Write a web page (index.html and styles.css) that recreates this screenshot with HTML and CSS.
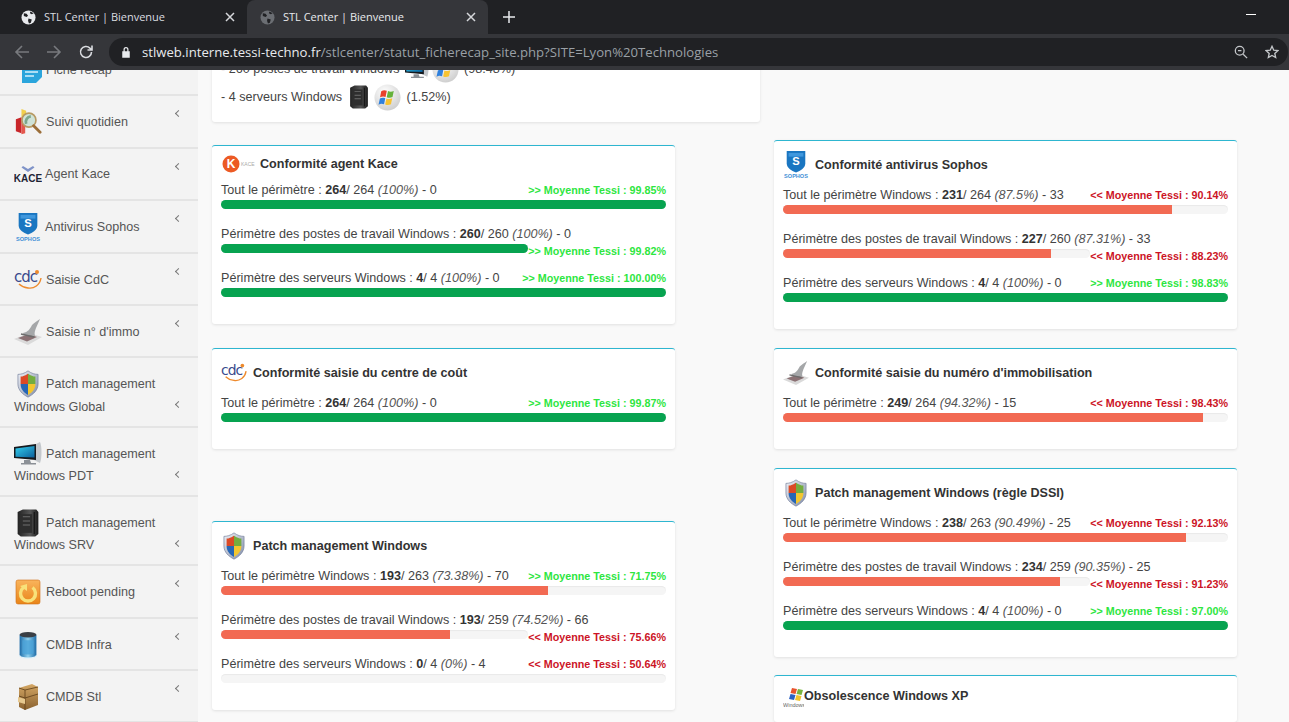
FILE: index.html
```html
<!DOCTYPE html>
<html lang="fr">
<head>
    <meta charset="UTF-8">
    <meta name="viewport" content="width=device-width, initial-scale=1.0">
    <title>STL Center | Bienvenue</title>
    <link rel="stylesheet" href="styles.css">
</head>
<body>
    <!-- Icon sprites -->
    <svg class="sprites" aria-hidden="true">
        <defs>
            <linearGradient id="g-silver" x1="0" y1="0" x2="1" y2="1"><stop offset="0" stop-color="#f2f4f8"/><stop offset="1" stop-color="#7f8ba8"/></linearGradient>
            <linearGradient id="g-screen" x1="0" y1="0" x2="1" y2="1"><stop offset="0" stop-color="#35d0ee"/><stop offset="1" stop-color="#0a5f9c"/></linearGradient>
            <linearGradient id="g-tower" x1="0" y1="0" x2="1" y2="0"><stop offset="0" stop-color="#222"/><stop offset=".6" stop-color="#555"/><stop offset="1" stop-color="#1c1c1c"/></linearGradient>
            <linearGradient id="g-orange" x1="0" y1="0" x2="0" y2="1"><stop offset="0" stop-color="#f9b45c"/><stop offset="1" stop-color="#e98518"/></linearGradient>
            <linearGradient id="g-can" x1="0" y1="0" x2="1" y2="0"><stop offset="0" stop-color="#1d6ca8"/><stop offset=".5" stop-color="#8fd0ee"/><stop offset="1" stop-color="#1d6ca8"/></linearGradient>
            <linearGradient id="g-box" x1="0" y1="0" x2="0" y2="1"><stop offset="0" stop-color="#d4a765"/><stop offset="1" stop-color="#8a6230"/></linearGradient>
            <radialGradient id="g-ball" cx=".4" cy=".3" r=".8"><stop offset="0" stop-color="#fff"/><stop offset="1" stop-color="#c9c9c9"/></radialGradient>
            <clipPath id="c-shield"><path d="M14 4C11 6.500 8 7.500 5.500 7.500V16C5.500 22 9.500 26 14 28.500C18.500 26 22.500 22 22.500 16V7.500C20 7.500 17 6.500 14 4Z"/></clipPath>
        </defs>

        <symbol id="i-globe" viewBox="0 0 16 16">
            <circle cx="8" cy="8" r="7.500" fill="currentColor"/>
            <path d="M3 3.500l3 .5 1.500 2-1.500 1.500-3-1zM8 9l3.500 1-1 3.500-2 1-1-3zM10 1.500l-.5 2 2 1 2-1z" fill="#202124"/>
        </symbol>
        <symbol id="i-shield" viewBox="0 0 28 32">
            <path d="M14 1C10 4 6 5 2.500 5V16C2.500 23 8 28 14 31C20 28 25.500 23 25.500 16V5C22 5 18 4 14 1Z" fill="url(#g-silver)" stroke="#75819c" stroke-width=".8"/>
            <g clip-path="url(#c-shield)">
                <rect x="4" y="3" width="10" height="13" fill="#dc4a26"/>
                <rect x="14" y="3" width="10" height="13" fill="#74ad3f"/>
                <rect x="4" y="16" width="10" height="14" fill="#2766b5"/>
                <rect x="14" y="16" width="10" height="14" fill="#f3c62f"/>
            </g>
        </symbol>
        <symbol id="i-monitor" viewBox="0 0 28 24">
            <path d="M20 3l6-3c2 4 2 16 0 21l-6-3z" fill="#c4c8cc"/>
            <path d="M0 5L22 2V18L0 16Z" fill="#15191e"/>
            <path d="M1.500 6.500L20.500 4V15.500L1.500 14.800Z" fill="url(#g-screen)"/>
            <path d="M10 18h6l1 3h5v1.500H7V21h3z" fill="#8b9096"/>
        </symbol>
        <symbol id="i-server" viewBox="0 0 24 27">
            <path d="M2 3l5-2.500h13L22 3V24l-3 2.500H5L2 24z" fill="url(#g-tower)"/>
            <path d="M5 5h11v18H5z" fill="#2e2e2e"/>
            <path d="M7 7h7v1H7zM7 11h7v1H7zM7 15h7v1H7z" fill="#6e6e6e"/>
            <path d="M18 3v21" stroke="#0f0f0f" stroke-width="1"/>
        </symbol>
        <symbol id="i-win" viewBox="0 0 28 28">
            <circle cx="14" cy="14" r="13.500" fill="url(#g-ball)"/>
            <path d="M7.500 7.500c2-1.200 4-1.200 5.800-.4l-1.300 6.300c-1.900-.8-3.800-.7-5.700.3z" fill="#e8412c"/>
            <path d="M14.500 7.300c2 1 4 1 6-.1l-1.300 6.400c-2 1-4 1-6 .2z" fill="#66b23b"/>
            <path d="M6.100 15c1.900-1 3.800-1 5.600-.3l-1.300 6.400c-1.900-.8-3.800-.7-5.700.3z" fill="#2f80dd"/>
            <path d="M12.900 15c2 .8 4 .8 6-.2l-1.300 6.300c-2 1-4 1-6 .2z" fill="#f7c331"/>
        </symbol>
        <symbol id="i-doc" viewBox="0 0 28 28">
            <path d="M8 8h20v13L22 27H8z" fill="#2ba5dc"/>
            <path d="M11 12h13M11 16h13M11 20h9" stroke="#d8f1fb" stroke-width="1.400"/>
            <path d="M2 0l9 9 3-2-8-8z" fill="#1b2430"/>
        </symbol>
        <symbol id="i-search" viewBox="0 0 28 30">
            <path d="M1 12l6-2v17l-6-2z" fill="#c8262a"/>
            <path d="M7 10l4 2v15l-4 1z" fill="#e4574d"/>
            <path d="M7 1l5 2v8l-5-1z" fill="#f1cf4c"/>
            <circle cx="15" cy="13" r="7.500" fill="#cfe3d8" stroke="#b79a63" stroke-width="1.800"/>
            <path d="M12 17a6 6 0 0 1 5-8" stroke="#7da78c" stroke-width="3" fill="none"/>
            <path d="M20 19l7 7" stroke="#9c6f3a" stroke-width="3" stroke-linecap="round"/>
        </symbol>
        <symbol id="i-stamp" viewBox="0 0 28 28">
            <path d="M0 21l15-6 13 4-14 8z" fill="#dadada"/>
            <path d="M4 20l11-4 8 3-10 4.500z" fill="#8b7174"/>
            <path d="M9 15c5-1 7-4 9-8 2-2 5-4 8-6l-4 9c-1 3-2 5-1 8l-11-1z" fill="#a5a7a9"/>
            <path d="M7 16l13 3" stroke="#6c6c6c" stroke-width="1.400"/>
        </symbol>
        <symbol id="i-reboot" viewBox="0 0 28 28">
            <rect x="2" y="2" width="24" height="24" rx="2" fill="url(#g-orange)" stroke="#d2701a" stroke-width=".6"/>
            <path d="M9.500 9.500a7.500 7.500 0 1 0 9 0" fill="none" stroke="#f8e27a" stroke-width="3.400"/>
            <path d="M6 8l7-2 0 7z" fill="#f8e27a"/>
        </symbol>
        <symbol id="i-can" viewBox="0 0 24 30">
            <path d="M3 4v22c0 4 18 4 18 0V4z" fill="url(#g-can)"/>
            <ellipse cx="12" cy="4" rx="9" ry="3" fill="#3a3f45"/>
            <path d="M6 10h12v14c-3 1.500-9 1.500-12 0z" fill="#4aa3d8" opacity=".8"/>
            <path d="M3 26c0 4 18 4 18 0" fill="none" stroke="#dff1fa" stroke-width="1.400"/>
        </symbol>
        <symbol id="i-box" viewBox="0 0 24 28">
            <path d="M3 5l13-4 6 3v18L9 27l-6-3z" fill="url(#g-box)"/>
            <path d="M3 13l6 2 13-4M3 5l6 2 13-3M9 7v20" fill="none" stroke="#5d3d18" stroke-width=".8"/>
            <path d="M2 14l7 2v5l-7-2z" fill="#e6c88f"/>
        </symbol>
    </svg>

    <div class="browser">
        <div class="tabstrip">
            <div class="tab">
                <svg class="tab-icon"><use href="#i-globe"/></svg>
                <span class="tab-title">STL Center | Bienvenue</span>
                <svg class="tab-close" viewBox="0 0 10 10"><path d="M1 1l8 8M9 1l-8 8"/></svg>
            </div>
            <div class="tab tab-active">
                <svg class="tab-icon"><use href="#i-globe"/></svg>
                <span class="tab-title">STL Center | Bienvenue</span>
                <svg class="tab-close" viewBox="0 0 10 10"><path d="M1 1l8 8M9 1l-8 8"/></svg>
            </div>
            <svg class="tab-new" viewBox="0 0 12 12"><path d="M6 0v12M0 6h12"/></svg>
            <div class="win-min"></div>
        </div>
        <div class="toolbar">
            <svg class="tool-icon tool-dim" viewBox="0 0 16 16"><path d="M15 8H2M8 2L2 8l6 6"/></svg>
            <svg class="tool-icon tool-dim" viewBox="0 0 16 16"><path d="M1 8h13M8 2l6 6-6 6"/></svg>
            <svg class="tool-icon" viewBox="0 0 16 16"><path d="M13.500 8a5.500 5.500 0 1 1-1.600-3.900L14 6M14 1.500V6H9.500"/></svg>
            <div class="omnibox">
                <svg class="lock" viewBox="0 0 12 14"><path d="M3 6V4a3 3 0 0 1 6 0v2h1.500v8h-9V6zM4.500 6h3V4a1.500 1.500 0 0 0-3 0z"/></svg>
                <span class="url"><span class="url-host">stlweb.interne.tessi-techno.fr</span>/stlcenter/statut_ficherecap_site.php?SITE=Lyon%20Technologies</span>
                <svg class="omni-icon" viewBox="0 0 16 16"><circle cx="6.500" cy="6.500" r="5"/><path d="M10.500 10.500L15 15M4.500 6.500h4"/></svg>
                <svg class="omni-icon" viewBox="0 0 16 16"><path d="M8 1.500l2 4.400 4.700.5-3.500 3.200 1 4.700L8 11.900l-4.200 2.400 1-4.700L1.300 6.400 6 5.900z"/></svg>
            </div>
        </div>
    </div>

    <div class="page">
        <nav class="sidebar">
            <a class="nav-item"><div class="nav-label"><svg class="nav-icon"><use href="#i-doc"/></svg>Fiche récap</div></a>
            <a class="nav-item"><div class="nav-label"><svg class="nav-icon"><use href="#i-search"/></svg>Suivi quotidien</div><span class="chevron"></span></a>
            <a class="nav-item"><div class="nav-label nav-label-tight nav-label-up"><svg class="nav-icon" viewBox="0 0 28 24">
                <path d="M9 4l5 3 5-3 1.500 1.500L14 10 7.500 5.500z" fill="#7f93c8"/>
                <text x="14" y="20" text-anchor="middle" class="logo-kace">KACE</text>
            </svg>Agent Kace</div><span class="chevron"></span></a>
            <a class="nav-item"><div class="nav-label nav-label-tight"><svg class="nav-icon" viewBox="0 0 28 30">
                <path d="M4 0h20v13c0 5-5 8-10 10C9 21 4 18 4 13z" fill="#1a76c1"/>
                <path d="M6 2h16v4H6z" fill="#3f97dd"/>
                <text x="14" y="15" text-anchor="middle" class="logo-s">S</text>
                <text x="14" y="29.500" text-anchor="middle" class="logo-sophos">SOPHOS</text>
            </svg>Antivirus Sophos</div><span class="chevron"></span></a>
            <a class="nav-item"><div class="nav-label"><svg class="nav-icon" viewBox="0 0 28 24">
                <text x="0" y="14" class="logo-cdc">cdc</text>
                <circle cx="23" cy="4" r="2" fill="#ee8a2c"/>
                <path d="M27 10c-1 7-7 11-13 10C10 19.500 7 18 5 16" fill="none" stroke="#ee8a2c" stroke-width="1.400"/>
            </svg>Saisie CdC</div><span class="chevron"></span></a>
            <a class="nav-item"><div class="nav-label"><svg class="nav-icon"><use href="#i-stamp"/></svg>Saisie n° d'immo</div><span class="chevron"></span></a>
            <a class="nav-item nav-item-double">
                <div class="nav-label"><svg class="nav-icon"><use href="#i-shield"/></svg>Patch management</div>
                <div class="nav-second">Windows Global<span class="chevron"></span></div>
            </a>
            <a class="nav-item nav-item-double">
                <div class="nav-label"><svg class="nav-icon"><use href="#i-monitor"/></svg>Patch management</div>
                <div class="nav-second">Windows PDT<span class="chevron"></span></div>
            </a>
            <a class="nav-item nav-item-double">
                <div class="nav-label"><svg class="nav-icon"><use href="#i-server"/></svg>Patch management</div>
                <div class="nav-second">Windows SRV<span class="chevron"></span></div>
            </a>
            <a class="nav-item"><div class="nav-label"><svg class="nav-icon"><use href="#i-reboot"/></svg>Reboot pending</div><span class="chevron"></span></a>
            <a class="nav-item"><div class="nav-label"><svg class="nav-icon"><use href="#i-can"/></svg>CMDB Infra</div><span class="chevron"></span></a>
            <a class="nav-item"><div class="nav-label"><svg class="nav-icon"><use href="#i-box"/></svg>CMDB Stl</div><span class="chevron"></span></a>
        </nav>

        <main class="content">
            <div class="summary">
                <div class="summary-row">- 260 postes de travail Windows<svg class="sum-server"><use href="#i-monitor"/></svg><svg class="sum-win"><use href="#i-win"/></svg> (98.48%)</div>
                <div class="summary-row">- 4 serveurs Windows<svg class="sum-server"><use href="#i-server"/></svg><svg class="sum-win"><use href="#i-win"/></svg> (1.52%)</div>
            </div>

            <div class="columns">
                <div class="col col-left">
                    <section class="card">
                        <div class="card-head card-head-small">
                            <svg class="kace-logo" viewBox="0 0 36 20">
                                <circle cx="10" cy="10" r="8.500" fill="#ec5a24"/>
                                <text x="10" y="14" text-anchor="middle" class="logo-k">K</text>
                                <text x="20" y="12" class="logo-kace-small">KACE</text>
                            </svg>
                            <h3>Conformité agent Kace</h3>
                        </div>
                        <div class="row">
                            <span class="label">Tout le périmètre : <b>264</b>/ 264 <i>(100%)</i> - 0</span>
                            <span class="avg avg-up">&gt;&gt; Moyenne Tessi : 99.85%</span>
                            <div class="bar"><div class="fill fill-ok" style="width: 100%"></div></div>
                        </div>
                        <div class="row row-narrow">
                            <span class="label">Périmètre des postes de travail Windows : <b>260</b>/ 260 <i>(100%)</i> - 0</span>
                            <div class="bar"><div class="fill fill-ok" style="width: 100%"></div></div>
                            <span class="avg avg-up">&gt;&gt; Moyenne Tessi : 99.82%</span>
                        </div>
                        <div class="row">
                            <span class="label">Périmètre des serveurs Windows : <b>4</b>/ 4 <i>(100%)</i> - 0</span>
                            <span class="avg avg-up">&gt;&gt; Moyenne Tessi : 100.00%</span>
                            <div class="bar"><div class="fill fill-ok" style="width: 100%"></div></div>
                        </div>
                    </section>

                    <section class="card">
                        <div class="card-head">
                            <svg class="head-icon" viewBox="0 0 28 24">
                                <text x="0" y="14" class="logo-cdc">cdc</text>
                                <circle cx="23" cy="4" r="2" fill="#ee8a2c"/>
                                <path d="M27 10c-1 7-7 11-13 10C10 19.500 7 18 5 16" fill="none" stroke="#ee8a2c" stroke-width="1.400"/>
                            </svg>
                            <h3>Conformité saisie du centre de coût</h3>
                        </div>
                        <div class="row">
                            <span class="label">Tout le périmètre : <b>264</b>/ 264 <i>(100%)</i> - 0</span>
                            <span class="avg avg-up">&gt;&gt; Moyenne Tessi : 99.87%</span>
                            <div class="bar"><div class="fill fill-ok" style="width: 100%"></div></div>
                        </div>
                    </section>

                    <section class="card card-spaced">
                        <div class="card-head">
                            <svg class="head-icon"><use href="#i-shield"/></svg>
                            <h3>Patch management Windows</h3>
                        </div>
                        <div class="row">
                            <span class="label">Tout le périmètre Windows : <b>193</b>/ 263 <i>(73.38%)</i> - 70</span>
                            <span class="avg avg-up">&gt;&gt; Moyenne Tessi : 71.75%</span>
                            <div class="bar"><div class="fill fill-ko" style="width: 73.38%"></div></div>
                        </div>
                        <div class="row row-narrow">
                            <span class="label">Périmètre des postes de travail Windows : <b>193</b>/ 259 <i>(74.52%)</i> - 66</span>
                            <div class="bar"><div class="fill fill-ko" style="width: 74.52%"></div></div>
                            <span class="avg avg-down">&lt;&lt; Moyenne Tessi : 75.66%</span>
                        </div>
                        <div class="row">
                            <span class="label">Périmètre des serveurs Windows : <b>0</b>/ 4 <i>(0%)</i> - 4</span>
                            <span class="avg avg-down">&lt;&lt; Moyenne Tessi : 50.64%</span>
                            <div class="bar"></div>
                        </div>
                    </section>
                </div>

                <div class="col col-right">
                    <section class="card">
                        <div class="card-head">
                            <svg class="head-icon" viewBox="0 0 28 30">
                                <path d="M4 0h20v13c0 5-5 8-10 10C9 21 4 18 4 13z" fill="#1a76c1"/>
                                <path d="M6 2h16v4H6z" fill="#3f97dd"/>
                                <text x="14" y="15" text-anchor="middle" class="logo-s">S</text>
                                <text x="14" y="29.500" text-anchor="middle" class="logo-sophos">SOPHOS</text>
                            </svg>
                            <h3>Conformité antivirus Sophos</h3>
                        </div>
                        <div class="row">
                            <span class="label">Tout le périmètre Windows : <b>231</b>/ 264 <i>(87.5%)</i> - 33</span>
                            <span class="avg avg-down">&lt;&lt; Moyenne Tessi : 90.14%</span>
                            <div class="bar"><div class="fill fill-ko" style="width: 87.5%"></div></div>
                        </div>
                        <div class="row row-narrow">
                            <span class="label">Périmètre des postes de travail Windows : <b>227</b>/ 260 <i>(87.31%)</i> - 33</span>
                            <div class="bar"><div class="fill fill-ko" style="width: 87.31%"></div></div>
                            <span class="avg avg-down">&lt;&lt; Moyenne Tessi : 88.23%</span>
                        </div>
                        <div class="row">
                            <span class="label">Périmètre des serveurs Windows : <b>4</b>/ 4 <i>(100%)</i> - 0</span>
                            <span class="avg avg-up">&gt;&gt; Moyenne Tessi : 98.83%</span>
                            <div class="bar"><div class="fill fill-ok" style="width: 100%"></div></div>
                        </div>
                    </section>

                    <section class="card">
                        <div class="card-head">
                            <svg class="head-icon"><use href="#i-stamp"/></svg>
                            <h3>Conformité saisie du numéro d'immobilisation</h3>
                        </div>
                        <div class="row">
                            <span class="label">Tout le périmètre : <b>249</b>/ 264 <i>(94.32%)</i> - 15</span>
                            <span class="avg avg-down">&lt;&lt; Moyenne Tessi : 98.43%</span>
                            <div class="bar"><div class="fill fill-ko" style="width: 94.32%"></div></div>
                        </div>
                    </section>

                    <section class="card">
                        <div class="card-head">
                            <svg class="head-icon"><use href="#i-shield"/></svg>
                            <h3>Patch management Windows (règle DSSI)</h3>
                        </div>
                        <div class="row">
                            <span class="label">Tout le périmètre Windows : <b>238</b>/ 263 <i>(90.49%)</i> - 25</span>
                            <span class="avg avg-down">&lt;&lt; Moyenne Tessi : 92.13%</span>
                            <div class="bar"><div class="fill fill-ko" style="width: 90.49%"></div></div>
                        </div>
                        <div class="row row-narrow">
                            <span class="label">Périmètre des postes de travail Windows : <b>234</b>/ 259 <i>(90.35%)</i> - 25</span>
                            <div class="bar"><div class="fill fill-ko" style="width: 90.35%"></div></div>
                            <span class="avg avg-down">&lt;&lt; Moyenne Tessi : 91.23%</span>
                        </div>
                        <div class="row">
                            <span class="label">Périmètre des serveurs Windows : <b>4</b>/ 4 <i>(100%)</i> - 0</span>
                            <span class="avg avg-up">&gt;&gt; Moyenne Tessi : 97.00%</span>
                            <div class="bar"><div class="fill fill-ok" style="width: 100%"></div></div>
                        </div>
                    </section>

                    <section class="card card-xp">
                        <div class="card-head card-head-xp">
                            <svg class="xp-icon" viewBox="0 0 21 22">
                                <path d="M9 0l5 1-1.500 5-5-1z" fill="#e8532c"/>
                                <path d="M15 1l5 1-1.500 5-5-1z" fill="#7ab53e"/>
                                <path d="M7.500 6l5 1-1.500 5-5-1z" fill="#2c62c4"/>
                                <path d="M13.500 7l5 1-1.500 5-5-1z" fill="#f2c42e"/>
                                <text x="0" y="19" class="logo-xp">Windows</text>
                            </svg>
                            <h3>Obsolescence Windows XP</h3>
                        </div>
                    </section>
                </div>
            </div>
        </main>
    </div>
</body>
</html>
```

FILE: styles.css
```css
* {
    margin: 0;
    padding: 0;
    box-sizing: border-box;
}

html, body {
    height: 100%;
    overflow: hidden;
}

body {
    font-family: "Liberation Sans", Arial, sans-serif;
    font-size: 12.600px;
    color: #444;
    background: #f9f9f9;
}

.sprites {
    position: absolute;
    width: 0;
    height: 0;
}

.logo-kace { font: 900 10px "Liberation Sans", sans-serif; fill: #1d2333; }
.logo-s { font: 700 12px "Liberation Sans", sans-serif; fill: #fff; }
.logo-sophos { font: 700 6px "Liberation Sans", sans-serif; fill: #3f8fd6; }
.logo-cdc { font: 400 15px "DejaVu Sans", sans-serif; fill: #3a4a8c; letter-spacing: -1px; }
.logo-k { font: 700 12px "Liberation Sans", sans-serif; fill: #fff; }
.logo-kace-small { font: 400 5px "Liberation Sans", sans-serif; fill: #aaa; }
.logo-xp { font: 400 5.500px "Liberation Sans", sans-serif; fill: #666; }

/* Browser chrome */
.browser {
    position: relative;
    z-index: 2;
    height: 70px;
    font-family: "Open Sans", "Noto Sans", sans-serif;
}

.tabstrip {
    height: 34px;
    background: #202124;
    display: flex;
    align-items: center;
    padding-left: 8px;
}

.tab {
    width: 239px;
    height: 34px;
    display: flex;
    align-items: center;
    padding-left: 13px;
    color: #dadce0;
    font-size: 11px;
}

.tab-active {
    background: #35363a;
    border-radius: 8px 8px 0 0;
    color: #e8eaed;
    width: 241px;
}

.tab-title {
    flex: 1;
    white-space: nowrap;
    padding-bottom: 1px;
}

.tab-icon {
    width: 15px;
    height: 15px;
    margin-right: 8px;
    color: #e8eaed;
}

.tab-active .tab-icon {
    color: #6b6e73;
}

.tab-close {
    width: 10px;
    height: 10px;
    margin-right: 12px;
    fill: none;
    stroke: #d6d8db;
    stroke-width: 1.500;
}

.tab-new {
    width: 12px;
    height: 12px;
    margin-left: 15px;
    fill: none;
    stroke: #e8eaed;
    stroke-width: 1.500;
}

.win-min {
    width: 10px;
    height: 1px;
    background: #fff;
    margin-left: auto;
    margin-right: 33px;
    margin-bottom: 6px;
}

.toolbar {
    height: 36px;
    background: #35363a;
    display: flex;
    align-items: center;
    padding-left: 14px;
    gap: 16px;
}

.tool-icon {
    width: 16px;
    height: 16px;
    fill: none;
    stroke: #dadce0;
    stroke-width: 1.600;
}

.tool-dim {
    stroke: #787a7e;
}

.omnibox {
    flex: 1;
    height: 28px;
    margin-left: -1px;
    margin-right: 1px;
    background: #202124;
    border-radius: 14px;
    display: flex;
    align-items: center;
    padding-left: 12px;
    padding-right: 9px;
}

.lock {
    width: 10px;
    height: 12px;
    fill: #e8eaed;
    margin-right: 11px;
}

.url {
    flex: 1;
    font-size: 13.150px;
    color: #9aa0a6;
    white-space: nowrap;
}

.url-host {
    color: #e8eaed;
}

.omni-icon {
    width: 14px;
    height: 14px;
    margin-left: 17px;
    fill: none;
    stroke: #c4c7ca;
    stroke-width: 1.500;
}

/* Page */
.page {
    height: 652px;
    overflow: hidden;
    display: flex;
    align-items: flex-start;
}

.sidebar {
    width: 198px;
    flex: none;
    margin-top: -26px;
    background: #f3f3f3;
    color: #555;
}

.nav-item {
    display: flex;
    height: 52.400px;
    padding: 12px 0 0 14px;
    border-bottom: 2px solid #e4e4e4;
}

.nav-item-double {
    display: block;
    height: 69.300px;
}

.nav-label {
    flex: 1;
    height: 28px;
    display: flex;
    align-items: center;
    gap: 4px;
    white-space: nowrap;
}

.nav-label-tight {
    gap: 3px;
}

.nav-label-up {
    margin-top: -1px;
}

.nav-icon {
    width: 28px;
    height: 28px;
    flex: none;
}

.nav-second {
    display: flex;
    justify-content: space-between;
    align-items: center;
    height: 17px;
}

.chevron {
    width: 5px;
    height: 5px;
    margin: 3px 17px 0 0;
    border-left: 1px solid #777;
    border-bottom: 1px solid #777;
    transform: rotate(45deg);
    flex: none;
}

.nav-second .chevron {
    margin: 0 17px 4px 0;
}

.content {
    flex: 1;
    margin-top: -15px;
    padding-left: 14px;
}

.summary {
    width: 548px;
    background: #fff;
    border-radius: 3px;
    box-shadow: 0 1px 3px rgba(0,0,0,0.1);
    padding: 0 9px 11px;
}

.summary-row {
    height: 28px;
    display: flex;
    align-items: center;
    white-space: pre;
}

.sum-server {
    width: 24px;
    height: 24px;
    margin: 0 3px 0 5px;
}

.sum-win {
    width: 27px;
    height: 27px;
    margin-right: 2px;
}

.columns {
    display: grid;
    grid-template-columns: 463px 463px;
    column-gap: 99px;
    align-items: start;
}

.col {
    display: flex;
    flex-direction: column;
}

.col-left {
    padding-top: 23px;
    gap: 24px;
}

.col-right {
    padding-top: 18px;
    gap: 19px;
}

.card {
    background: #fff;
    border-top: 1px solid #2eb6d0;
    border-radius: 3px;
    box-shadow: 0 1px 3px rgba(0,0,0,0.1);
    padding: 0 9px 12px;
}

.card-spaced {
    margin-top: 48px;
}

.card-xp {
    margin-top: -1px;
}

.card-head {
    display: flex;
    align-items: center;
    gap: 6px;
    padding: 10px 0 6px;
    height: 44px;
}

.card-head-small {
    height: 34px;
    gap: 3px;
    padding: 9px 0 7px;
}

.card-head-xp {
    gap: 0;
    height: 34px;
    padding-top: 12px;
}

.card-head h3 {
    font-size: 12.600px;
    font-weight: 700;
    color: #333;
}

.head-icon {
    width: 26px;
    height: 28px;
    flex: none;
}

.kace-logo {
    width: 36px;
    height: 20px;
    flex: none;
}

.xp-icon {
    width: 21px;
    height: 22px;
    flex: none;
    align-self: flex-start;
}

.row {
    display: grid;
    grid-template-columns: 1fr auto;
    margin-bottom: 15px;
}

.label {
    height: 20px;
    line-height: 21px;
    white-space: nowrap;
}

.label b {
    color: #333;
}

.label i {
    color: #555;
}

.avg {
    height: 20px;
    font-size: 10.750px;
    font-weight: 700;
    line-height: 21px;
    text-align: right;
    white-space: nowrap;
}

.avg-up {
    color: #2ee63f;
}

.avg-down {
    color: #cc1426;
}

.bar {
    grid-column: 1 / -1;
    height: 9px;
    background: #f5f5f5;
    border-radius: 5px;
    overflow: hidden;
    box-shadow: inset 0 1px 1px rgba(0,0,0,0.05);
}

.fill {
    height: 100%;
}

.fill-ok {
    background: #07a350;
}

.fill-ko {
    background: #f26a53;
}

/* Bar only takes part of the row, average sits beside it */
.row-narrow {
    grid-template-columns: 307px 1fr;
    margin-bottom: 10px;
}

.row-narrow .label {
    grid-column: 1 / -1;
}

.row-narrow .bar {
    grid-column: 1;
}

.row-narrow .avg {
    height: 14px;
    line-height: 15px;
}
```
